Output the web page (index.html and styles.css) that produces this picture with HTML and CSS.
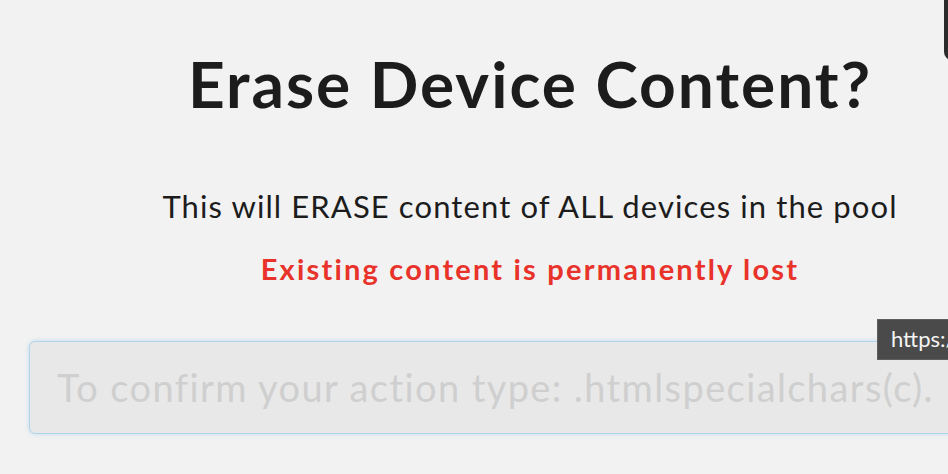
FILE: index.html
```html
<!DOCTYPE html>
<html>
<head>
    <title>Erase Device Content</title>
    <link rel="stylesheet" href="styles.css">
</head>
<body>
    <div class="corner-tab"></div>
    <div class="modal">
        <h1>Erase Device Content?</h1>
        <p class="info">This will ERASE content of ALL devices in the pool</p>
        <p class="warning">Existing content is permanently lost</p>
        <form class="confirm-form">
            <input type="text" class="confirm-input" placeholder="To confirm your action type: .htmlspecialchars(c).">
        </form>
    </div>
    <div class="url-tip">https://</div>
</body>
</html>
```

FILE: styles.css
```css
html, body {
    margin: 0;
    padding: 0;
    height: 100%;
    overflow: hidden;
}
body {
    background-color: #f2f2f2;
    font-family: Lato, "Open Sans", sans-serif;
    color: #1c1c1c;
    position: relative;
}
.modal {
    width: 1002px;
    margin-left: 29px;
    text-align: center;
}
h1 {
    font-size: 64px;
    font-weight: bold;
    line-height: 1.2;
    letter-spacing: 2px;
    margin: 46px 0 0 0;
}
.info {
    font-size: 31px;
    line-height: 1.2;
    letter-spacing: 1.1px;
    margin: 65px 0 0 0;
}
.warning {
    font-size: 29px;
    font-weight: bold;
    line-height: 1.2;
    letter-spacing: 2.2px;
    color: #e8322a;
    margin: 27px 0 0 0;
}
.confirm-form {
    margin-top: 54px;
}
.confirm-input {
    box-sizing: border-box;
    width: 100%;
    height: 93px;
    padding: 0 27px;
    border: 1px solid #aed4ee;
    border-radius: 6px;
    box-shadow: 0 0 5px rgba(130, 185, 225, 0.4);
    background-color: #e8e8e8;
    font-family: Lato, "Open Sans", sans-serif;
    font-size: 38px;
    letter-spacing: 1.4px;
    color: #333;
    outline: none;
}
.confirm-input::placeholder {
    color: #cfcfcf;
}
.url-tip {
    position: absolute;
    left: 877px;
    top: 319px;
    height: 39px;
    padding: 0 13px;
    background-color: #4a4a4a;
    border: 1px solid #5e5e5e;
    color: #f4f4f4;
    font-size: 22px;
    line-height: 38px;
    white-space: nowrap;
}
.corner-tab {
    position: absolute;
    left: 944px;
    top: -10px;
    width: 30px;
    height: 70px;
    background-color: #2b2b2b;
    border-radius: 8px;
}
```
